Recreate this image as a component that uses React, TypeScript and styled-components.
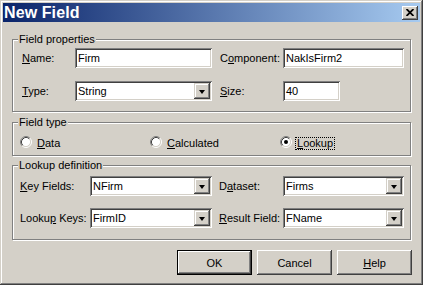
import styled, { createGlobalStyle } from 'styled-components';

const FACE = '#d4d0c8';

const GlobalStyle = createGlobalStyle`
  html, body {
    margin: 0;
    padding: 0;
    background: ${FACE};
  }
  body {
    font-family: 'Liberation Sans', Arial, sans-serif;
    font-size: 11px;
    color: #000;
  }
`;

const Window = styled.div`
  width: 423px;
  height: 285px;
  box-sizing: border-box;
  padding: 3px;
  background: ${FACE};
  box-shadow: inset -1px -1px #404040, inset 1px 1px ${FACE}, inset -2px -2px #808080, inset 2px 2px #fff;
  display: flex;
  flex-direction: column;
`;

const TitleBar = styled.div`
  height: 19px;
  flex: none;
  display: flex;
  align-items: center;
  justify-content: space-between;
  padding: 0 2px 0 1px;
  background: linear-gradient(to right, #0a246a, #a6caf0);
`;

const Title = styled.span`
  color: #fff;
  font-weight: bold;
  font-size: 16px;
  line-height: 19px;
  letter-spacing: 0.1px;
`;

const CloseButton = styled.div`
  width: 16px;
  height: 14px;
  box-sizing: border-box;
  background: ${FACE};
  box-shadow: inset -1px -1px #404040, inset 1px 1px #fff, inset -2px -2px #808080, inset 2px 2px ${FACE};
  display: flex;
  align-items: center;
  justify-content: center;
`;

const Body = styled.div`
  flex: 1;
  display: flex;
  flex-direction: column;
  padding: 17px 9px 0 9px;
`;

const Group = styled.div<{ $pad: string; $mt?: number }>`
  position: relative;
  border: 1px solid #808080;
  box-shadow: inset 1px 1px #fff, 1px 1px #fff;
  padding: ${({ $pad }) => $pad};
  margin-top: ${({ $mt }) => $mt ?? 0}px;
`;

const Legend = styled.span`
  position: absolute;
  top: -7px;
  left: 5px;
  padding: 0 1px;
  background: ${FACE};
  line-height: 13px;
  white-space: nowrap;
`;

const FormGrid = styled.div<{ $cols: string; $gap: number }>`
  display: grid;
  grid-template-columns: ${({ $cols }) => $cols};
  row-gap: ${({ $gap }) => $gap}px;
  align-items: center;
`;

const Label = styled.span`
  white-space: nowrap;
  line-height: 13px;
`;

const Edit = styled.div<{ $w: number }>`
  width: ${({ $w }) => $w}px;
  height: 20px;
  box-sizing: border-box;
  background: #fff;
  padding: 0 3px;
  line-height: 20px;
  white-space: nowrap;
  box-shadow: inset 1px 1px #808080, inset -1px -1px #fff, inset 2px 2px #404040, inset -2px -2px ${FACE};
`;

const Combo = styled(Edit)`
  display: flex;
  align-items: center;
  justify-content: space-between;
  padding: 2px 2px 2px 3px;
  line-height: 16px;
`;

const DropButton = styled.div`
  width: 16px;
  height: 16px;
  box-sizing: border-box;
  background: ${FACE};
  box-shadow: inset -1px -1px #404040, inset 1px 1px ${FACE}, inset -2px -2px #808080, inset 2px 2px #fff;
  display: flex;
  align-items: center;
  justify-content: center;
`;

const Arrow = styled.span`
  width: 0;
  height: 0;
  margin-top: 1px;
  border-left: 3.5px solid transparent;
  border-right: 3.5px solid transparent;
  border-top: 4px solid #000;
`;

const RadioGrid = styled.div`
  display: grid;
  grid-template-columns: 130px 130px 1fr;
  height: 16px;
  align-items: center;
`;

const RadioItem = styled.div`
  display: flex;
  align-items: center;
  gap: 3px;
`;

const RadioLabel = styled.span<{ $focused?: boolean }>`
  border: 1px ${({ $focused }) => ($focused ? 'dotted #000' : 'solid transparent')};
  padding: 0 1px;
  line-height: 11px;
  margin-top: 2px;
`;

const ButtonRow = styled.div`
  display: flex;
  justify-content: flex-end;
  gap: 5px;
  margin: 10px -1px 0 0;
`;

const Button = styled.div<{ $default?: boolean }>`
  width: 75px;
  height: 25px;
  box-sizing: border-box;
  display: flex;
  align-items: center;
  justify-content: center;
  background: ${FACE};
  border: 1px solid ${({ $default }) => ($default ? '#000' : 'transparent')};
  box-shadow: ${({ $default }) =>
    $default
      ? `inset -1px -1px #404040, inset 1px 1px #fff, inset -2px -2px #808080, inset 2px 2px ${FACE}`
      : `inset -1px -1px #404040, inset 1px 1px #fff, inset -2px -2px #808080, inset 2px 2px ${FACE}`};
  ${({ $default }) => (!$default ? 'border: none;' : '')}
`;

function Radio({ checked }: { checked?: boolean }) {
  return (
    <svg width="12" height="12" viewBox="0 0 12 12">
      <circle cx="6" cy="6" r="4.5" fill="#fff" />
      <path d="M2.11 9.89 A5.5 5.5 0 0 1 9.89 2.11" fill="none" stroke="#808080" />
      <path d="M9.89 2.11 A5.5 5.5 0 0 1 2.11 9.89" fill="none" stroke="#fff" />
      <path d="M2.82 9.18 A4.5 4.5 0 0 1 9.18 2.82" fill="none" stroke="#404040" />
      <path d="M9.18 2.82 A4.5 4.5 0 0 1 2.82 9.18" fill="none" stroke={FACE} />
      {checked && <circle cx="6" cy="6" r="2" fill="#000" />}
    </svg>
  );
}

function Combobox({ w, value }: { w: number; value: string }) {
  return (
    <Combo $w={w}>
      <span>{value}</span>
      <DropButton>
        <Arrow />
      </DropButton>
    </Combo>
  );
}

export default function App() {
  return (
    <>
      <GlobalStyle />
      <Window>
        <TitleBar>
          <Title>New Field</Title>
          <CloseButton>
            <svg width="8" height="7" viewBox="0 0 8 7">
              <path d="M0.5 0 L7.5 7 M7.5 0 L0.5 7" stroke="#000" strokeWidth="1.8" />
            </svg>
          </CloseButton>
        </TitleBar>

        <Body>
          <Group $pad="8px 0 10px 9px">
            <Legend>Field properties</Legend>
            <FormGrid $cols="53px 145px 63px 1fr" $gap={13}>
              <Label><u>N</u>ame:</Label>
              <Edit $w={137}>Firm</Edit>
              <Label>C<u>o</u>mponent:</Label>
              <Edit $w={121}>NakIsFirm2</Edit>
              <Label><u>T</u>ype:</Label>
              <Combobox w={137} value="String" />
              <Label><u>S</u>ize:</Label>
              <Edit $w={57}>40</Edit>
            </FormGrid>
          </Group>

          <Group $pad="11px 0 5px 7px" $mt={10}>
            <Legend>Field type</Legend>
            <RadioGrid>
              <RadioItem>
                <Radio />
                <RadioLabel><u>D</u>ata</RadioLabel>
              </RadioItem>
              <RadioItem>
                <Radio />
                <RadioLabel><u>C</u>alculated</RadioLabel>
              </RadioItem>
              <RadioItem>
                <Radio checked />
                <RadioLabel $focused><u>L</u>ookup</RadioLabel>
              </RadioItem>
            </RadioGrid>
          </Group>

          <Group $pad="10px 0 11px 7px" $mt={9}>
            <Legend>Lookup definition</Legend>
            <FormGrid $cols="70px 129px 64px 1fr" $gap={12}>
              <Label><u>K</u>ey Fields:</Label>
              <Combobox w={122} value="NFirm" />
              <Label>D<u>a</u>taset:</Label>
              <Combobox w={121} value="Firms" />
              <Label>Looku<u>p</u> Keys:</Label>
              <Combobox w={122} value="FirmID" />
              <Label><u>R</u>esult Field:</Label>
              <Combobox w={121} value="FName" />
            </FormGrid>
          </Group>

          <ButtonRow>
            <Button $default>OK</Button>
            <Button>Cancel</Button>
            <Button><u>H</u>elp</Button>
          </ButtonRow>
        </Body>
      </Window>
    </>
  );
}
